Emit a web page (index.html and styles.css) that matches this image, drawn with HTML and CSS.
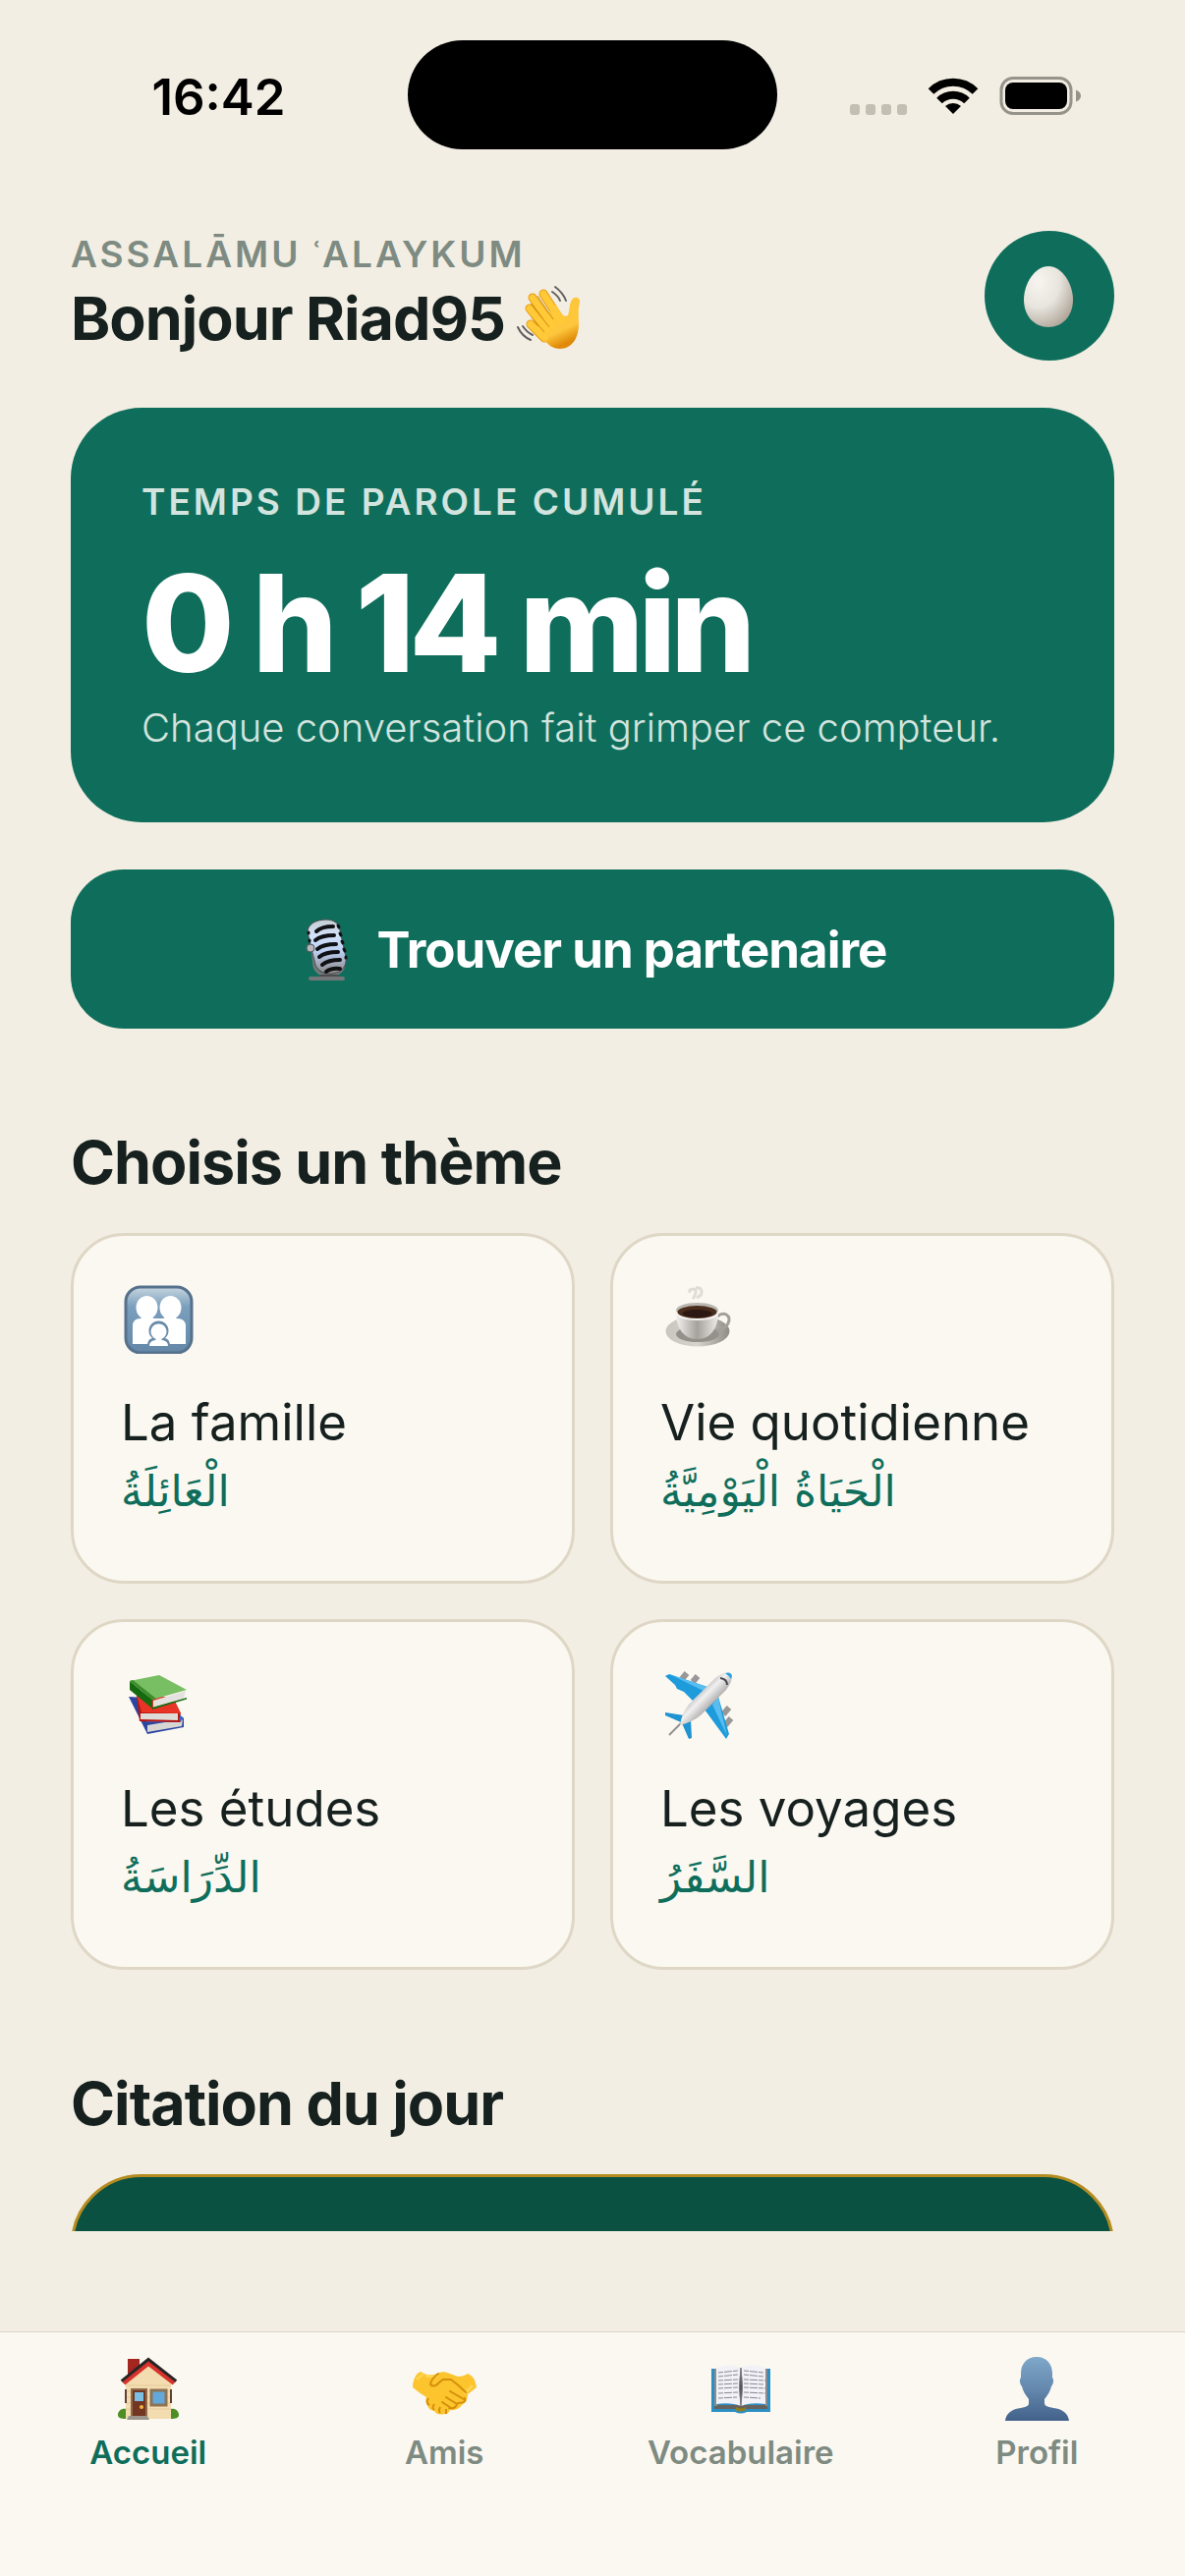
FILE: index.html
```html
<!DOCTYPE html>
<html lang="fr">
<head>
<meta charset="utf-8">
<meta name="viewport" content="width=device-width, initial-scale=1">
<title>Accueil</title>
<link rel="stylesheet" href="styles.css">
</head>

<body>

<div class="status-bar">
  <div class="status-side"><span class="time">16:42</span></div>
  <div class="island"></div>
  <div class="status-side">
    <svg class="status-icons" viewBox="0 0 236 42" width="236" height="42" aria-hidden="true">
      <g fill="#c3bfb3">
        <rect x="1" y="29" width="10" height="11" rx="3"/>
        <rect x="17" y="29" width="10" height="11" rx="3"/>
        <rect x="33" y="29" width="10" height="11" rx="3"/>
        <rect x="49" y="29" width="10" height="11" rx="3"/>
      </g>
      <path d="M106 39l-8-8a12 12 0 0 1 16 0z"/>
      <g fill="none" stroke="#000" stroke-width="8">
        <path d="M92 25.500a20 20 0 0 1 28 0"/>
        <path d="M83.500 16a32 32 0 0 1 45 0"/>
      </g>
      <rect x="155" y="2.500" width="71" height="36" rx="12" fill="none" stroke="#96938b" stroke-width="3"/>
      <rect x="159" y="7" width="63" height="27" rx="8"/>
      <path d="M231 14.500q5 2 5 6t-5 6z" fill="#96938b"/>
    </svg>
  </div>
</div>

<main>
  <header class="greeting">
    <div>
      <p class="eyebrow">ASSALĀMU ʿALAYKUM</p>
      <h1>Bonjour Riad95
        <svg viewBox="0 0 72 72" width="72" height="72" aria-hidden="true">
          <defs>
            <linearGradient id="skin" x1="0" y1="0" x2="0.4" y2="1">
              <stop offset="0" stop-color="#ffc83a"/>
              <stop offset="0.75" stop-color="#fdc63c"/>
              <stop offset="1" stop-color="#e08a08"/>
            </linearGradient>
          </defs>
          <g stroke="#e59a12" stroke-width="9" stroke-linecap="round" fill="none">
            <path d="M31 11l18 28M20 15l20 28M17 26l18 22M18 42l14 14"/>
          </g>
          <path d="M56 33c2-6 1-11 4-16 3-4 9-2 8 3-2 8-1 14-1 22 0 14-7 25-19 25-8 0-12-4-18-11L24 46l20-24c4 7 7 14 12 11z" fill="url(#skin)"/>
          <g stroke="#ffc938" stroke-width="7" stroke-linecap="round" fill="none">
            <path d="M31 11l18 28M20 15l20 28M17 26l18 22M18 42l14 14"/>
          </g>
          <g stroke="#d18a10" stroke-width="1" fill="none">
            <path d="M25 13l16 24M18 21l19 24M19 35l13 15"/>
          </g>
          <g stroke="#636060" stroke-width="2" stroke-linecap="round" fill="none">
            <path d="M43 4q8 6 11 14M40 9q6 4 8 9M5 45q4 9 13 13M10 44q4 6 10 9"/>
          </g>
        </svg>
      </h1>
    </div>
    <a class="avatar" href="#profil" aria-label="Profil">
      <svg viewBox="0 0 54 66" width="54" height="66" aria-hidden="true">
        <defs>
          <radialGradient id="egg" cx="0.3" cy="0.25" r="0.85">
            <stop offset="0" stop-color="#f8f5f0"/>
            <stop offset="0.5" stop-color="#e8e5df"/>
            <stop offset="1" stop-color="#aca294"/>
          </radialGradient>
        </defs>
        <path d="M26 3c14 0 25 18 25 34 0 17-11 28-25 28S1 54 1 37C1 21 12 3 26 3z" fill="url(#egg)"/>
      </svg>
    </a>
  </header>

  <section class="counter">
    <h2>TEMPS DE PAROLE CUMULÉ</h2>
    <p class="total">0 h 14 min</p>
    <p class="hint">Chaque conversation fait grimper ce compteur.</p>
  </section>

  <button class="find" type="button">
    <svg viewBox="0 0 60 66" width="60" height="66" aria-hidden="true">
      <defs>
        <linearGradient id="mic" x1="0" y1="0" x2="0" y2="1">
          <stop offset="0" stop-color="#c5ccd2"/>
          <stop offset="0.3" stop-color="#d3e2fb"/>
          <stop offset="0.6" stop-color="#b9cdf0"/>
          <stop offset="1" stop-color="#8b8684"/>
        </linearGradient>
      </defs>
      <path d="M14 32l2 18q1 6 8 9h12q8-2 10-9" fill="none" stroke="#77787b" stroke-width="3"/>
      <path d="M9 16C9 8 17 3 28 3c8 0 13 4 14 11l6 27c1 9-3 15-13 17-9 1-16-3-18-9z" fill="url(#mic)" stroke="#4b4d52" stroke-width="1"/>
      <g fill="none" stroke="#101114" stroke-width="4" stroke-linecap="round">
        <path d="M18 15q5-5 17-5M17 24q6-5 19-5M19 33q6-5 19-5M21 41q6-5 19-5M24 49q6-5 18-5M28 56q5-4 14-3"/>
        <path d="M10 16v1M11 24v1M40 9l1 2M42 17l1 2M44 25l1 2M46 33l1 2M48 41v1" stroke-width="3"/>
      </g>
      <circle cx="12" cy="32" r="4" fill="#b5b7ba" stroke="#55575c" stroke-width="1"/>
      <path d="M22 59h18l2 3H20z" fill="#4b4c4e"/>
      <rect x="10" y="61" width="37" height="4" rx="2" fill="#73777a"/>
    </svg>
    Trouver un partenaire
  </button>

  <h2 class="section-title">Choisis un thème</h2>

  <div class="themes">
    <a class="theme" href="#famille">
      <svg viewBox="0 0 76 72" width="76" height="72" aria-hidden="true">
        <defs>
          <linearGradient id="fam" x1="0" y1="0" x2="0" y2="1">
            <stop offset="0" stop-color="#c6d5df"/>
            <stop offset="0.3" stop-color="#7b9fbd"/>
            <stop offset="1" stop-color="#6487a8"/>
          </linearGradient>
        </defs>
        <rect x="5" y="4" width="67" height="67" rx="15" fill="url(#fam)" stroke="#56718c" stroke-width="3"/>
        <g fill="#fff">
          <ellipse cx="26.500" cy="25" rx="11" ry="12"/>
          <ellipse cx="50.500" cy="25" rx="11" ry="12"/>
          <path d="M12 62V44q0-8 8-8l3-2h7l4 2h9l4-2h7l3 2q9 0 9 8v18z"/>
        </g>
        <path d="M27 64q0-7 5-8a10 10 0 1 1 13 0q5 1 5 8z" fill="#6a8cab"/>
        <path d="M29 64q0-5 6-6l1-1a8 8 0 1 1 5 0l1 1q6 1 6 6z" fill="#fff"/>
      </svg>
      <span class="name">La famille</span>
      <span class="arabic" lang="ar" dir="rtl">الْعَائِلَةُ</span>
    </a>

    <a class="theme" href="#quotidien">
      <svg viewBox="0 0 76 72" width="76" height="72" aria-hidden="true">
        <defs>
          <linearGradient id="cup" x1="0" y1="0" x2="1" y2="0">
            <stop offset="0" stop-color="#f3f1ee"/>
            <stop offset="0.5" stop-color="#a5a29d"/>
            <stop offset="1" stop-color="#eeece8"/>
          </linearGradient>
          <linearGradient id="saucer" x1="0" y1="0" x2="1" y2="0">
            <stop offset="0" stop-color="#c9c5bf"/>
            <stop offset="0.5" stop-color="#d6d3ce"/>
            <stop offset="1" stop-color="#8f8b85"/>
          </linearGradient>
        </defs>
        <ellipse cx="38" cy="49" rx="32.500" ry="15.500" fill="url(#saucer)"/>
        <ellipse cx="38" cy="52" rx="22" ry="8" fill="#94908a"/>
        <path d="M58 34q5-4 9-2 5 3 2 9-3 6-12 7" fill="none" stroke="#a39f9a" stroke-width="3"/>
        <path d="M16 29c0 16 7 28 21.500 28S59 45 59 29z" fill="url(#cup)"/>
        <ellipse cx="37.500" cy="28" rx="21.500" ry="8" fill="#bab6b0"/>
        <ellipse cx="37.500" cy="29.500" rx="20" ry="6.500" fill="#4a2d1b"/>
        <ellipse cx="37.500" cy="31" rx="15" ry="4" fill="#2b1812"/>
        <path d="M16 29q1 8 21.500 8T59 29" fill="none" stroke="#f6f4f1" stroke-width="2"/>
        <path d="M30 10q-1-4 3-4t3 4-3 6M36 5q5-1 6 3t-5 7" fill="none" stroke="#d2d0cb" stroke-width="3" opacity="0.700"/>
      </svg>
      <span class="name">Vie quotidienne</span>
      <span class="arabic" lang="ar" dir="rtl">الْحَيَاةُ الْيَوْمِيَّةُ</span>
    </a>

    <a class="theme" href="#etudes">
      <svg viewBox="0 0 76 72" width="76" height="72" aria-hidden="true">
        <path d="M8 28l19 38 37-7v-9L40 30z" fill="#2b45a0"/>
        <path d="M27 57l36-6-1 7-35 6z" fill="#d8d6d3"/>
        <path d="M24 54h36l4-4-6-5z" fill="#4163c8"/>
        <path d="M16 26l3 27 42 1-2-3 2-6-8-16z" fill="#b8150e"/>
        <path d="M16 26l5 18 40 1-8-16z" fill="#e83427"/>
        <path d="M20 45h38v7l-38-1z" fill="#dedcd8"/>
        <path d="M9 12l23 19v9L9 21z" fill="#156a10"/>
        <path d="M9 12l30-6 28 15-35 10z" fill="#78be62"/>
        <path d="M9 12l3-1 24 19-4 1z" fill="#3b8d2a"/>
        <path d="M33 32l33-10-2 8-31 9z" fill="#e4e2de"/>
        <path d="M32 39l35-10v1.500L32 41z" fill="#156a10"/>
      </svg>
      <span class="name">Les études</span>
      <span class="arabic" lang="ar" dir="rtl">الدِّرَاسَةُ</span>
    </a>

    <a class="theme" href="#voyages">
      <svg viewBox="0 0 76 72" width="76" height="72" aria-hidden="true">
        <defs>
          <linearGradient id="hull" x1="0.3" y1="0.3" x2="0.7" y2="0.7">
            <stop offset="0" stop-color="#a5a3a2"/>
            <stop offset="0.4" stop-color="#f2f1f1"/>
            <stop offset="1" stop-color="#8b8988"/>
          </linearGradient>
        </defs>
        <g stroke="#9a9896" stroke-width="6">
          <path d="M27 4l-5 6M38 7l-5 6M70 39l-6 7M72 50l-6 7"/>
        </g>
        <path d="M5 7l4-2 39 13-15 14-9-9-7-3-2-4z" fill="#1e9bdb"/>
        <path d="M9 5l39 13-4 4z" fill="#59bdf0"/>
        <path d="M59 28l11 38-3 5-22-30z" fill="#1e9bdb"/>
        <path d="M59 28l3 15 6 25-15-32z" fill="#59bdf0"/>
        <path d="M5 44l19 3-3 7L5 47zM31 51l1 19-3 1-7-16z" fill="#1e94d2"/>
        <path d="M9 67l13-13" stroke="#949290" stroke-width="2"/>
        <path d="M20 57q2-13 9-21L56 9q9-7 16-5 3 7-5 17L42 46q-9 8-22 11z" fill="url(#hull)"/>
        <path d="M66 4q6-2 7 3l-1 3q-3-4-6-6z" fill="#2ea3dd"/>
        <path d="M61 9q7 1 7 7" fill="none" stroke="#4b4b4c" stroke-width="2"/>
      </svg>
      <span class="name">Les voyages</span>
      <span class="arabic" lang="ar" dir="rtl">السَّفَرُ</span>
    </a>
  </div>

  <h2 class="section-title">Citation du jour</h2>
  <section class="quote"></section>
</main>

<nav>
  <a class="active" href="#accueil">
    <svg viewBox="0 0 72 72" width="72" height="72" aria-hidden="true">
      <path d="M15 5h12v16L15 26z" fill="#a3261f"/>
      <path d="M13 27L36 9l23 18v39H13z" fill="#f3dcb0"/>
      <path d="M13 32h46M13 38h46M13 44h46M13 50h46M13 56h46" stroke="#e5ca9b" stroke-width="1"/>
      <path d="M9 28L36 6l28 22" fill="none" stroke="#272525" stroke-width="4"/>
      <path d="M11 30L36 10l26 20" fill="none" stroke="#d8322c" stroke-width="4"/>
      <path d="M13 36v14M59 36v14" stroke="#60422f" stroke-width="2"/>
      <rect x="19" y="36" width="15" height="28" fill="#733622" stroke="#8d6a4a" stroke-width="2"/>
      <rect x="22" y="39" width="9" height="9" fill="#79bfe6"/>
      <circle cx="29" cy="54" r="2" fill="#f1b63f"/>
      <rect x="39" y="37" width="15" height="15" fill="#62a8da" stroke="#8d7354" stroke-width="3"/>
      <path d="M13 56c-4-1-8 2-8 6 0 3 3 4 8 4zM59 56c4-1 8 2 8 6 0 3-3 4-8 4z" fill="#4d8f25"/>
      <path d="M16 63h19l2 4H14z" fill="#9c958d"/>
    </svg>
    Accueil
  </a>
  <a href="#amis">
    <svg viewBox="0 0 72 72" width="72" height="72" aria-hidden="true">
      <path d="M4 34c0-7 3-14 8-16l6 3q6 1 11-1 5-3 10-1l11 4q6 0 10-3 7 2 9 14l-9 7q0 8-6 11-4 6-12 5-2 5-6 4-7 2-10-3-6-1-7-6-3-4-1-8-7-4-14-10z" fill="#fcc42d"/>
      <path d="M17 22q7 2 13-1M8 26q5-4 7-6M56 40q5-3 9-8" stroke="#ffe068" stroke-width="3" fill="none" opacity="0.600"/>
      <path d="M30 20q-7 5-8 11 4 4 9-2l4-3h8q8 6 15 13M42 38l14 8M38 44l11 7M34 49l9 6M57 45q2 5-7 5M49 51q-1 5-8 4" fill="none" stroke="#d58f0b" stroke-width="2" stroke-linecap="round"/>
      <path d="M20 45q-3 5 1 7M26 51q-3 4 0 6M32 54q-2 4 0 6M38 56v5" fill="none" stroke="#d58f0b" stroke-width="2"/>
    </svg>
    Amis
  </a>
  <a href="#vocabulaire">
    <svg viewBox="0 0 72 72" width="72" height="72" aria-hidden="true">
      <path d="M6 15h60v44H42q-6 3-12 0H6z" fill="#2c8fc4"/>
      <path d="M9 52h54v4H9z" fill="#66625e"/>
      <path d="M9 15h3v38H9zM61 15h2v38h-2z" fill="#8c8b8d"/>
      <path d="M11 14q15-5 25 0 10-5 25 0v37q-15-2-25 2-10-4-25-2z" fill="#f2f1f7"/>
      <path d="M36 14q-3 20 0 39 3-19 0-39z" fill="#55545a" stroke="#77757b" stroke-width="1"/>
      <g stroke="#8b8992" stroke-width="1" stroke-dasharray="5 1 8 1">
        <path d="M13 19l20-2M13 23l20-2M13 27l20-1M13 31l20-1M13 35l20-1M13 40l20-1M13 45l19-1M39 17l20 2M39 21l20 2M39 26l22 1M39 30l20 1M39 34l23 1M39 39l22 1M39 44l17 1"/>
      </g>
      <path d="M31 54q5 3 10 0v3q-5 3-10 0z" fill="#8f7f1a"/>
    </svg>
    Vocabulaire
  </a>
  <a href="#profil">
    <svg viewBox="0 0 72 72" width="72" height="72" aria-hidden="true">
      <defs>
        <linearGradient id="bust" x1="0" y1="0" x2="0" y2="1">
          <stop offset="0" stop-color="#7fa8c9"/>
          <stop offset="0.5" stop-color="#6488ae"/>
          <stop offset="1" stop-color="#42618a"/>
        </linearGradient>
      </defs>
      <path d="M36 3c11 0 16 8 16 17v4c2 2 1 7-1 9-1 5-4 9-7 13v4c0 3 4 4 9 5 9 1 15 5 16 13H4c1-8 7-12 16-13 5-1 8-2 8-5v-4c-3-4-6-8-7-13-2-2-3-7-1-9v-4c0-9 5-17 16-17z" fill="url(#bust)"/>
    </svg>
    Profil
  </a>
</nav>

</body>
</html>
```

FILE: styles.css
```css
* {
  box-sizing: border-box;
}

body {
  display: flex;
  flex-direction: column;
  height: 100vh;
  margin: 0;
  background: #f3eee3;
  color: #16211f;
  font-family: Inter, "Noto Sans", sans-serif;
}

h1, h2, p {
  margin: 0;
}

a {
  color: inherit;
  text-decoration: none;
}

svg {
  flex: none;
}

/* status bar */
.status-bar {
  display: flex;
  flex: none;
  height: 193px;
  padding-top: 41px;
}

.status-side {
  display: flex;
  flex: 1;
  justify-content: center;
  height: 114px;
  align-items: center;
}

.time {
  color: #000;
  font-size: 51px;
  font-weight: 600;
  padding-left: 30px;
}

.status-icons {
  margin-right: 34px;
}

.island {
  width: 376px;
  height: 111px;
  border-radius: 56px;
  background: #000;
}

/* content */
main {
  flex: 1;
  min-height: 0;
  overflow: hidden;
  padding: 42px 72px 0;
}

.greeting {
  display: flex;
  justify-content: space-between;
  align-items: center;
  height: 132px;
  margin-bottom: 48px;
}

.eyebrow,
.counter h2 {
  font-size: 37px;
  font-weight: 600;
  letter-spacing: 3px;
}

.eyebrow {
  color: #7e8b82;
  line-height: 46px;
}

h1 {
  display: flex;
  align-items: center;
  gap: 8px;
  font-size: 61px;
  font-weight: 700;
  letter-spacing: -1px;
  line-height: 84px;
}

.avatar {
  display: flex;
  align-items: center;
  justify-content: center;
  width: 132px;
  height: 132px;
  border-radius: 50%;
  background: #0f6e5b;
}

.counter {
  padding: 72px;
  border-radius: 72px;
  background: #0f6e5b;
  color: #fff;
}

.counter h2 {
  color: #d3e4df;
  line-height: 48px;
}

.total {
  margin-top: 16px;
  font-size: 137px;
  font-weight: 800;
  letter-spacing: -6px;
  line-height: 166px;
}

.hint {
  color: #d3e4df;
  font-size: 40px;
  font-weight: 300;
  line-height: 48px;
}

.find {
  display: flex;
  align-items: center;
  justify-content: center;
  gap: 20px;
  width: 100%;
  height: 162px;
  margin-top: 48px;
  border: 0;
  border-radius: 54px;
  background: #0f6e5b;
  color: #fff;
  font-family: inherit;
  font-size: 51px;
  font-weight: 700;
  letter-spacing: -1px;
}

.section-title {
  margin: 96px 0 32px;
  font-size: 61px;
  font-weight: 700;
  letter-spacing: -1px;
  line-height: 80px;
}

.themes {
  display: grid;
  grid-template-columns: 1fr 1fr;
  gap: 36px;
}

.theme {
  display: flex;
  flex-direction: column;
  align-items: flex-start;
  padding: 48px 48px 56px;
  border: 3px solid #dfd7c6;
  border-radius: 54px;
  background: #fbf8f1;
}

.name {
  margin-top: 36px;
  font-size: 51px;
  line-height: 68px;
}

.arabic {
  color: #0f6e5b;
  font-family: "DejaVu Sans", sans-serif;
  font-size: 44px;
  line-height: 71px;
}

.quote {
  height: 480px;
  border: 3px solid #b58c20;
  border-radius: 72px;
  background: #0a5141;
}

/* tab bar */
nav {
  display: grid;
  flex: none;
  grid-template-columns: repeat(4, 1fr);
  margin-top: 102px;
  padding: 22px 0 106px;
  border-top: 1px solid #dcd6c8;
  background: #fbf8f1;
}

nav a {
  display: flex;
  flex-direction: column;
  align-items: center;
  gap: 8px;
  color: #7e8b82;
  font-size: 33px;
  font-weight: 600;
  line-height: 40px;
}

nav .active {
  color: #0f6e5b;
}
```
